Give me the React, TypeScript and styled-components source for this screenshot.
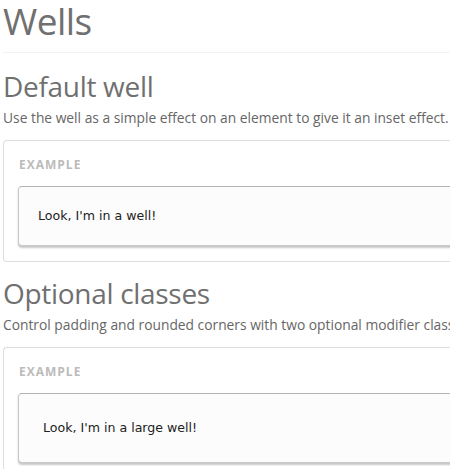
import styled, { createGlobalStyle } from 'styled-components'

const GlobalStyle = createGlobalStyle`
  html, body {
    margin: 0;
    padding: 0;
    background: #fff;
    overflow: hidden;
  }
`

const Page = styled.div`
  width: 720px;
  padding: 0 0 0 3px;
  font-family: "Open Sans", "Noto Sans", sans-serif;
  color: #666;
`

const PageTitle = styled.h1`
  margin: 0;
  padding: 0 0 10px;
  font-size: 37px;
  line-height: 42px;
  font-weight: 400;
  color: #707070;
  border-bottom: 1px solid #f3f3f3;
  letter-spacing: -0.5px;
`

const SectionTitle = styled.h2<{ $top: number }>`
  margin: ${p => p.$top}px 0 0;
  font-size: 28px;
  line-height: 34px;
  font-weight: 400;
  color: #707070;
  letter-spacing: -0.3px;
`

const Lead = styled.p`
  margin: 5px 0 0;
  font-size: 13.8px;
  line-height: 20px;
  color: #666;
  white-space: nowrap;
`

const Example = styled.div`
  margin-top: 12px;
  padding: 15px 15px 15px 14px;
  border: 1px solid #ddd;
  border-radius: 4px 0 0 4px;
  border-right: none;
`

const ExampleLabel = styled.div`
  padding-left: 1px;
  margin-bottom: 13px;
  font-size: 12px;
  line-height: 17px;
  font-weight: 700;
  letter-spacing: 1px;
  text-transform: uppercase;
  color: #bbb;
`

const Well = styled.div<{ $large?: boolean }>`
  padding: ${p => (p.$large ? '24px' : '19px')};
  background: #fcfcfc;
  border: 1px solid #c8c8c8;
  border-top-color: #b3b3b3;
  border-right: none;
  border-radius: 4px 0 0 4px;
  box-shadow: 0 2px 2px rgba(0, 0, 0, 0.22);
  font-family: "DejaVu Sans", Verdana, sans-serif;
  font-size: 12.6px;
  line-height: 20px;
  color: #222;
`

const App = () => {
  return (
    <Page>
      <GlobalStyle />
      <PageTitle>Wells</PageTitle>

      <SectionTitle $top={16}>Default well</SectionTitle>
      <Lead>Use the well as a simple effect on an element to give it an inset effect.</Lead>
      <Example>
        <ExampleLabel>Example</ExampleLabel>
        <Well>Look, I'm in a well!</Well>
      </Example>

      <SectionTitle $top={14}>Optional classes</SectionTitle>
      <Lead>Control padding and rounded corners with two optional modifier classes.</Lead>
      <Example>
        <ExampleLabel>Example</ExampleLabel>
        <Well $large>Look, I'm in a large well!</Well>
      </Example>
    </Page>
  )
}

export default App
